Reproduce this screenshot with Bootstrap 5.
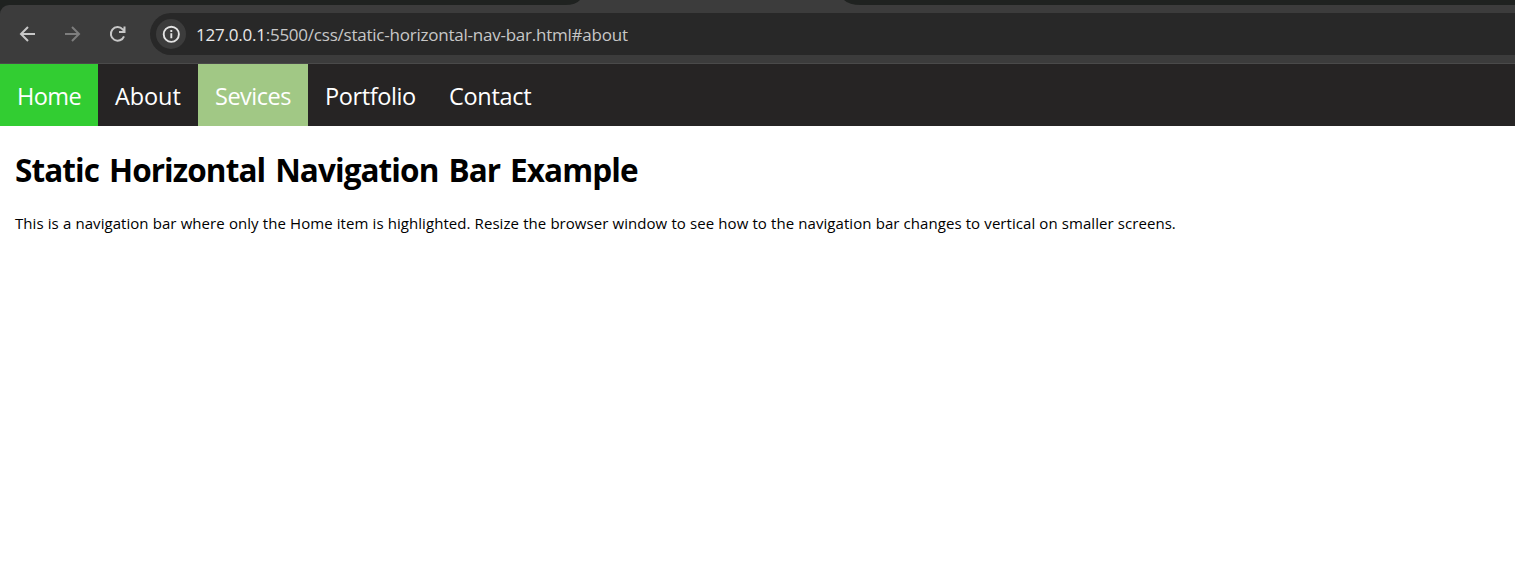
<!DOCTYPE html>
<html lang="en">
<head>
<meta charset="utf-8">
<meta name="viewport" content="width=device-width, initial-scale=1">
<title>Static Horizontal Navigation Bar Example</title>
<link href="https://cdn.jsdelivr.net/npm/bootstrap@5.3.0/dist/css/bootstrap.min.css" rel="stylesheet">
<style>
body { font-family: "Open Sans", "Noto Sans", sans-serif; color: #000; background: #fff; }
.browser { height: 64px; background: #1f2220; }
.tab-strip { height: 5px; }
.tab-shape { width: 296px; height: 5px; margin-left: 565px; display: block; }
.toolbar { height: 59px; background: #3c3c3c; border-bottom: 1px solid #4a4a4a; border-top-left-radius: 9px; padding: 8px 0 8px 16px; }
.tool { width: 24px; height: 24px; margin-right: 21px; color: #c7c7c7; }
.tool.dim { color: #7d7d7d; }
.address { height: 42px; margin-left: -1px; padding-left: 6px; background: #282828; border-radius: 21px 0 0 21px; }
.site-info { width: 30px; height: 30px; background: #3c3c3c; color: #e3e3e3; }
.url { margin-left: 10px; padding-top: 1px; font-size: 17px; letter-spacing: -.23px; color: #c7c7c7; line-height: 25px; white-space: nowrap; }
.url b { font-weight: 400; color: #e8e8e8; }
.site-nav { height: 62px; background: #262424; }
.site-nav .nav-link { height: 62px; padding: 0 0 0 17px; font-size: 23.5px; line-height: 65px; color: #fff; white-space: nowrap; letter-spacing: -.4px; }
.site-nav .w-home { width: 98px; background: #32cd32; letter-spacing: -.6px; }
.site-nav .w-about { width: 100px; letter-spacing: -.1px; }
.site-nav .w-services { width: 110px; background: #a1c885; letter-spacing: -.5px; }
.w-portfolio { width: 124px; }
.site-nav .w-contact { width: 116px; letter-spacing: -.3px; }
main { padding: 22px 15px 0; }
h1 { font-size: 31.5px; font-weight: 700; line-height: 44px; margin: 0 0 19px; letter-spacing: -.92px; word-spacing: 2.7px; white-space: nowrap; }
main p { font-size: 15px; line-height: 24px; margin: 0; white-space: nowrap; letter-spacing: .05px; word-spacing: .2px; }
</style>
</head>
<body>
<header class="browser">
  <div class="tab-strip"><svg class="tab-shape" viewBox="0 0 296 5"><path d="M0 5Q11 5 15 0H279Q284 5 296 5Z" fill="#3c3c3c"/></svg></div>
  <div class="toolbar d-flex align-items-center">
    <svg class="tool flex-shrink-0" viewBox="0 0 24 24" fill="none" stroke="currentColor" stroke-width="2"><path d="M19 12H5.5M12 5L5 12l7 7"/></svg>
    <svg class="tool dim flex-shrink-0" viewBox="0 0 24 24" fill="none" stroke="currentColor" stroke-width="2"><path d="M4 12h13.500M11 5l7 7-7 7"/></svg>
    <svg class="tool flex-shrink-0" viewBox="0 0 24 24" fill="none" stroke="currentColor" stroke-width="2"><path d="M18 14.300A6.800 6.800 0 1 1 16.700 7.300L18.500 9.200M18.500 4.500v5.500H13"/></svg>
    <div class="address flex-grow-1 d-flex align-items-center">
      <span class="site-info rounded-circle d-flex align-items-center justify-content-center flex-shrink-0">
        <svg width="18" height="18" viewBox="0 0 18 18" fill="none" stroke="currentColor" stroke-width="1.900"><circle cx="9.300" cy="9.300" r="7.600"/><path d="M9.300 8.300v5M9.300 5.100v1.900"/></svg>
      </span>
      <span class="url"><b>127.0.0.1</b>:5500/css/static-horizontal-nav-bar.html#about</span>
    </div>
  </div>
</header>
<nav class="site-nav nav flex-nowrap">
  <a class="nav-link w-home" href="#home">Home</a>
  <a class="nav-link w-about" href="#about">About</a>
  <a class="nav-link w-services" href="#services">Sevices</a>
  <a class="nav-link w-portfolio" href="#portfolio">Portfolio</a>
  <a class="nav-link w-contact" href="#contact">Contact</a>
</nav>
<main>
  <h1>Static Horizontal Navigation Bar Example</h1>
  <p>This is a navigation bar where only the Home item is highlighted. Resize the browser window to see how to the navigation bar changes to vertical on smaller screens.</p>
</main>
<script src="https://cdn.jsdelivr.net/npm/bootstrap@5.3.0/dist/js/bootstrap.bundle.min.js"></script>
</body>
</html>
